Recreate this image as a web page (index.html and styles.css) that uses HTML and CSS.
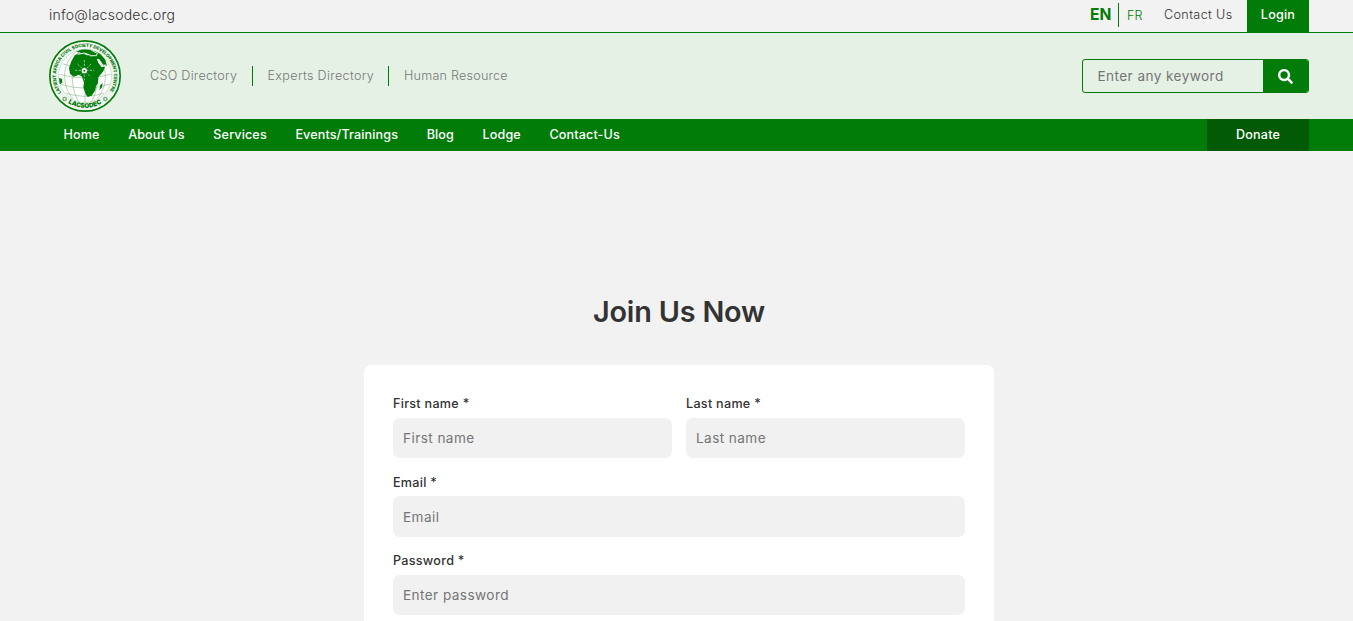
FILE: index.html
```html
<!DOCTYPE html>
<html lang="en">
<head>
<meta charset="utf-8">
<title>LACSODEC - Join Us</title>
<link rel="stylesheet" href="styles.css">
</head>
<body>
<div class="topbar"><div class="wrap topbar-row">
  <a class="mail">info@lacsodec.org</a>
  <div class="top-links">
    <a class="lang-en">EN</a><a class="lang-fr">FR</a>
    <a class="contact">Contact Us</a><a class="login">Login</a>
  </div>
</div></div>
<header class="header"><div class="wrap header-row">
  <svg class="logo" viewBox="27 18 216 216" role="img" aria-label="LACSODEC">
    <defs>
      <path id="ring-top" d="M64 176 A87 87 0 1 1 206 176"/>
      <path id="ring-bottom" d="M68 194 A95 95 0 0 0 202 194"/>
      <clipPath id="globe"><circle cx="135" cy="126" r="80"/></clipPath>
    </defs>
    <circle class="rim" cx="135" cy="126" r="105.5"/>
    <circle class="rim-inner" cx="135" cy="126" r="101"/>
    <text class="ring-text"><textPath href="#ring-top" textLength="374">LATIENT AFRICA CIVIL SOCIETY DEVELOPMENT CENTRE</textPath></text>
    <circle class="seal" cx="74" cy="195" r="5"/><circle class="seal" cx="196" cy="195" r="5"/>
    <g clip-path="url(#globe)">
      <circle class="grid" cx="135" cy="126" r="80"/>
      <path class="grid" d="M135 49V205M120 49C89 87 90 161 116 203M106 54C64 91 65 158 99 194M150 49C181 87 180 161 154 203M164 54C206 91 205 158 171 194M69 90Q135 110 201 90M58 121Q135 143 212 121M62 151Q135 174 208 151M79 178Q135 196 191 178"/>
      <path class="land" d="M104 64L116 58L134 61L151 67L168 66L175 86L184 99L195 98L190 112L175 130L174 147L168 157L166 169L155 185L143 189L137 181L130 160L132 146L126 128L117 122L101 128L90 119L87 102L94 82Z"/>
      <path class="land" d="M108 54L124 46L151 46L179 57L196 77L201 96L190 93L178 76L166 74L157 65L145 65L140 58L126 59L118 55ZM181 153L188 147L186 160L178 169ZM57 132L66 135L67 146L59 151Z"/>
      <path class="water" d="M113 61L133 57L155 65L171 65M153 48L173 59L169 63M172 76L186 94L199 93"/>
    </g>
    <text class="ring-name"><textPath href="#ring-bottom" startOffset="50%" text-anchor="middle">LACSODEC</textPath></text>
    <g class="rays">
      <path d="M133 78V139M105 109H163M113 90L153 130M153 90L113 130"/>
      <circle cx="133" cy="110" r="8"/>
    </g>
    <circle class="hub" cx="133" cy="110" r="3"/>
  </svg>
  <nav class="directory"><a class="d1">CSO Directory</a><a class="d2">Experts Directory</a><a class="d3">Human Resource</a></nav>
  <form class="search">
    <input type="text" placeholder="Enter any keyword" aria-label="Search">
    <button type="button" aria-label="Search"><svg viewBox="0 0 512 512"><path d="M505 442.7 405.3 343c-4.500-4.500-10.600-7-17-7H372c27.600-35.300 44-79.700 44-128C416 93.100 322.900 0 208 0S0 93.100 0 208s93.100 208 208 208c48.300 0 92.700-16.400 128-44v16.300c0 6.400 2.500 12.500 7 17l99.700 99.700c9.400 9.400 24.600 9.400 33.900 0l28.300-28.300c9.400-9.400 9.400-24.600.1-34zM208 336c-70.700 0-128-57.200-128-128 0-70.700 57.200-128 128-128 70.700 0 128 57.200 128 128 0 70.700-57.200 128-128 128z"/></svg></button>
  </form>
</div></header>
<div class="navbar"><div class="wrap nav-row">
  <nav class="menu"><a>Home</a><a>About Us</a><a>Services</a><a>Events/Trainings</a><a>Blog</a><a>Lodge</a><a>Contact-Us</a></nav>
  <a class="donate">Donate</a>
</div></div>
<main class="join">
  <h1>Join Us Now</h1>
  <form class="card">
    <div class="pair">
      <label class="field"><span>First name *</span><input type="text" placeholder="First name"></label>
      <label class="field"><span>Last name *</span><input type="text" placeholder="Last name"></label>
    </div>
    <label class="field email"><span>Email *</span><input type="email" placeholder="Email"></label>
    <label class="field last"><span>Password *</span><input type="password" placeholder="Enter password"></label>
  </form>
</main>
</body>
</html>
```
FILE: styles.css
```css
* { box-sizing: border-box; }
body {
  margin: 0;
  height: 621px;
  overflow: hidden;
  background: #f2f2f2;
  color: #333;
  font: 12.600px/20px Inter, "Liberation Sans", sans-serif;
}
input, button { font-family: inherit; outline: 0; }
.wrap { width: 1260px; margin-left: 49px; display: flex; }

.topbar { height: 33px; border-bottom: 1px solid #027c08; }
.topbar-row { height: 32px; justify-content: space-between; }
.mail { font-size: 14px; line-height: 30px; font-weight: 300; letter-spacing: .25px; }
.top-links { display: flex; line-height: 29px; }
.lang-en { width: 29px; height: 24px; margin-top: 3px; line-height: 23px; border-right: 1px solid #027c08; color: #027c08; font-size: 15.600px; font-weight: 700; }
.lang-fr { width: 45px; padding-left: 8px; line-height: 31px; color: #027c08; font-weight: 300; }
.contact { width: 83px; font-weight: 300; letter-spacing: .37px; }
.login { width: 62px; height: 32px; background: #027c08; color: #fff; text-align: center; font-weight: 500; letter-spacing: .2px; }

.header { height: 86px; background: #e6f1e6; }
.header-row { height: 86px; align-items: center; }
.logo { width: 72px; height: 72px; margin-right: 29px; }
.rim { fill: #fff; stroke: #027c08; stroke-width: 5; }
.rim-inner { fill: #edf3ed; }
.ring-text { fill: #027c08; font: 800 13.500px Inter, sans-serif; }
.ring-name { fill: #027c08; font: 900 19px Inter, sans-serif; }
.seal { fill: none; stroke: #78a878; stroke-width: 4; }
.grid { fill: #fff; stroke: #92bd92; stroke-width: 2; }
path.grid { fill: none; }
.land, .hub { fill: #027c08; }
.water { fill: none; stroke: #e6f1e6; stroke-width: 3; }
.rays path { stroke: #a9cba9; stroke-width: 2.5; stroke-dasharray: 7 4; fill: none; }
.rays circle { fill: #fff; }
.directory { display: flex; color: #777; font-weight: 300; }
.directory a { height: 20px; line-height: 19px; letter-spacing: .27px; white-space: nowrap; }
.d1 { width: 103px; border-right: 1px solid #027c08; }
.directory .d2 { width: 136px; padding-left: 14.500px; border-right: 1px solid #027c08; letter-spacing: .33px; }
.directory .d3 { padding-left: 15px; letter-spacing: .22px; }
.search { display: flex; width: 227px; height: 34px; margin-left: auto; border: 1px solid #027c08; border-radius: 3px; overflow: hidden; }
.search input { width: 180px; padding: 0 0 1px 14.500px; border: 0; background: transparent; font-size: 13.600px; letter-spacing: .42px; }
.search button { flex: 1; padding: 0; border: 0; background: #027c08; display: flex; align-items: center; justify-content: center; }
.search svg { width: 15px; height: 15px; fill: #fff; }
::placeholder { color: #757575; opacity: 1; }

.navbar { height: 32px; background: #027c08; color: #fff; font-weight: 500; line-height: 31px; }
.nav-row { justify-content: space-between; }
.menu { display: flex; gap: 28.600px; padding-left: 14.500px; white-space: nowrap; letter-spacing: .12px; }
.donate { width: 102px; height: 32px; background: #025a05; text-align: center; letter-spacing: .2px; }

.join { width: 630px; margin-left: 364px; padding-top: 140px; }
h1 { margin: 0; height: 74px; font-size: 28.800px; line-height: 42px; font-weight: 600; letter-spacing: -.18px; text-align: center; }
.card { height: 256px; padding: 29px 29px 0; border-radius: 7px 7px 0 0; background: #fff; }
.pair { display: grid; grid-template-columns: 279px 279px; column-gap: 14px; }
.field { display: block; height: 78.400px; }
.last { height: auto; }
.field span { display: block; height: 24px; line-height: 19px; font-weight: 500; letter-spacing: .28px; }
.email span { line-height: 21px; }
.field input { display: block; width: 100%; height: 40.300px; padding: 0 10px 1px; border: 0; border-radius: 7px; background: #f1f1f1; font-size: 13.600px; letter-spacing: .42px; }
.email input { padding-bottom: 0; }
.last input { padding: 1px 10px 0; }
```
